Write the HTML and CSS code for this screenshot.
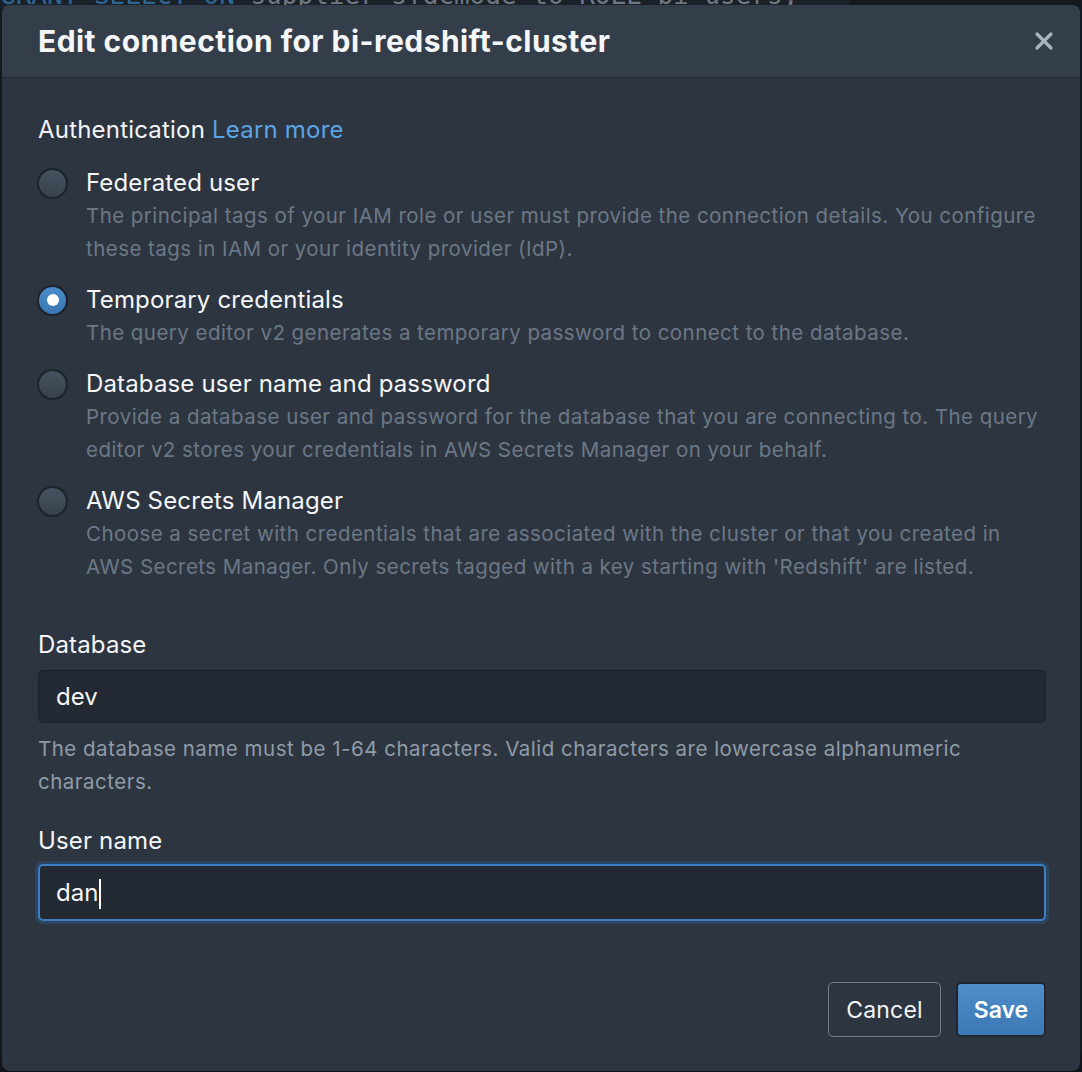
FILE: index.html
```html
<!DOCTYPE html>
<html lang="en">
<head>
<meta charset="utf-8">
<title>Edit connection</title>
<link rel="stylesheet" href="styles.css">
</head>
<body>
<div class="editor">
  <div class="code-line"><span class="kw">GRANT SELECT ON</span> supplier_sfdcmode to ROLE bi_users;</div>
</div>
<div class="modal" role="dialog">
  <div class="modal-header">
    <h1 class="modal-title">Edit connection for bi-redshift-cluster</h1>
    <button class="close" aria-label="Close">
      <svg width="20" height="20" viewBox="0 0 20 20"><path d="M3 3 L17 17 M17 3 L3 17" stroke="#aab4bf" stroke-width="3.2" stroke-linecap="round"/></svg>
    </button>
  </div>
  <div class="modal-body">
    <div class="section-title">Authentication <a class="link" href="#">Learn more</a></div>
    <div class="radio-group">
      <div class="option">
        <span class="radio"></span>
        <div class="option-text">
          <div class="option-label">Federated user</div>
          <div class="option-desc">The principal tags of your IAM role or user must provide the connection details. You configure these tags in IAM or your identity provider (IdP).</div>
        </div>
      </div>
      <div class="option">
        <span class="radio checked"></span>
        <div class="option-text">
          <div class="option-label">Temporary credentials</div>
          <div class="option-desc">The query editor v2 generates a temporary password to connect to the database.</div>
        </div>
      </div>
      <div class="option">
        <span class="radio"></span>
        <div class="option-text">
          <div class="option-label">Database user name and password</div>
          <div class="option-desc">Provide a database user and password for the database that you are connecting to. The query editor v2 stores your credentials in AWS Secrets Manager on your behalf.</div>
        </div>
      </div>
      <div class="option">
        <span class="radio"></span>
        <div class="option-text">
          <div class="option-label">AWS Secrets Manager</div>
          <div class="option-desc">Choose a secret with credentials that are associated with the cluster or that you created in AWS Secrets Manager. Only secrets tagged with a key starting with 'Redshift' are listed.</div>
        </div>
      </div>
    </div>

    <div class="field field-db">
      <div class="field-label">Database</div>
      <div class="input">dev</div>
      <div class="hint">The database name must be 1-64 characters. Valid characters are lowercase alphanumeric characters.</div>
    </div>

    <div class="field field-user">
      <div class="field-label">User name</div>
      <div class="input focused">dan<span class="caret"></span></div>
    </div>
  </div>
  <div class="modal-footer">
    <button class="btn btn-cancel">Cancel</button>
    <button class="btn btn-save">Save</button>
  </div>
</div>
</body>
</html>
```

FILE: styles.css
```css
* { box-sizing: border-box; }

html, body {
  margin: 0;
  height: 100%;
}

body {
  background: #12161b;
  font-family: Inter, "Noto Sans", "Liberation Sans", sans-serif;
  overflow: hidden;
}

.editor {
  height: 100%;
  background: #151a20;
}

.code-line {
  font-family: "DejaVu Sans Mono", "Liberation Mono", monospace;
  font-size: 26px;
  line-height: 26px;
  color: #6f7882;
  margin-top: -18px;
  padding-left: 0;
  white-space: nowrap;
  width: 850px;
  background: #1b2128;
}

.code-line .kw { color: #2f6594; }

.modal {
  position: absolute;
  left: 2px;
  top: 5px;
  width: 1078px;
  height: 1066px;
  background: #2d3540;
  border-radius: 8px;
  display: flex;
  flex-direction: column;
  overflow: hidden;
  color: #f2f4f6;
}

.modal-header {
  height: 73px;
  background: #343e4a;
  border-bottom: 1px solid #232a32;
  display: flex;
  align-items: center;
  justify-content: space-between;
  padding: 0 24px 0 36px;
  flex: none;
}

.modal-title {
  margin: 0;
  font-size: 30px;
  font-weight: 700;
  letter-spacing: 0.45px;
  color: #f4f6f8;
}

.close {
  background: none;
  border: 0;
  padding: 0;
  width: 24px;
  height: 24px;
  display: flex;
  align-items: center;
  justify-content: center;
}

.modal-body {
  padding: 35px 34px 0 36px;
  flex: 1;
}

.section-title {
  font-size: 24px;
  line-height: 33px;
  letter-spacing: 0.2px;
  color: #f2f4f6;
}

.link {
  color: #5aa5e6;
  text-decoration: none;
}

.radio-group {
  margin-top: 20px;
  display: flex;
  flex-direction: column;
  gap: 18px;
}

.option {
  display: flex;
  align-items: flex-start;
}

.radio {
  width: 31px;
  height: 31px;
  border-radius: 50%;
  flex: none;
  margin-top: 1.5px;
  margin-left: -1px;
  background: linear-gradient(#465260, #38424e);
  border: 2px solid #1d232a;
  position: relative;
}

.radio.checked {
  background: linear-gradient(#4a8bc9, #3a77b4);
}

.radio.checked::after {
  content: "";
  position: absolute;
  width: 12px;
  height: 12px;
  border-radius: 50%;
  background: #ffffff;
  left: 50%;
  top: 50%;
  transform: translate(-50%, -50%);
}

.option-text {
  margin-left: 18px;
}

.option-label {
  font-size: 24px;
  line-height: 33px;
  letter-spacing: 0.15px;
  color: #f4f6f8;
}

.option-desc {
  font-size: 20.5px;
  line-height: 33px;
  letter-spacing: 0.45px;
  color: #6c7886;
}

.field-db {
  margin-top: 45px;
}

.field-label {
  font-size: 24px;
  line-height: 33px;
  letter-spacing: 0.15px;
  color: #f4f6f8;
}

.input {
  margin-top: 9px;
  height: 53px;
  background: #232a33;
  border: 1px solid #1b2027;
  border-radius: 5px;
  font-size: 24px;
  line-height: 51px;
  padding-left: 17px;
  color: #f4f6f8;
}

.input.focused {
  margin-top: 7px;
  height: 57px;
  border: 2px solid #3d7fc0;
  box-shadow: 0 0 0 3px #2c4560;
  line-height: 53px;
  padding-left: 16px;
}

.caret {
  display: inline-block;
  width: 2px;
  height: 30px;
  background: #ffffff;
  vertical-align: middle;
  margin-left: 1px;
}

.hint {
  margin-top: 9px;
  font-size: 20.5px;
  line-height: 33px;
  letter-spacing: 0.5px;
  color: #8f9ba7;
}

.field-user {
  margin-top: 26px;
}

.modal-footer {
  flex: none;
  display: flex;
  justify-content: flex-end;
  gap: 15px;
  padding: 0 34px 34px 0;
}

.btn {
  height: 55px;
  font-family: inherit;
  font-size: 23px;
  border-radius: 5px;
  cursor: pointer;
}

.btn-cancel {
  width: 113px;
  background: transparent;
  border: 1px solid #737d88;
  color: #f2f4f6;
  letter-spacing: 0.2px;
}

.btn-save {
  width: 90px;
  background: linear-gradient(#4f8ec9, #3b78b5);
  border: 2px solid #1f262e;
  color: #ffffff;
  font-weight: 600;
}
```
